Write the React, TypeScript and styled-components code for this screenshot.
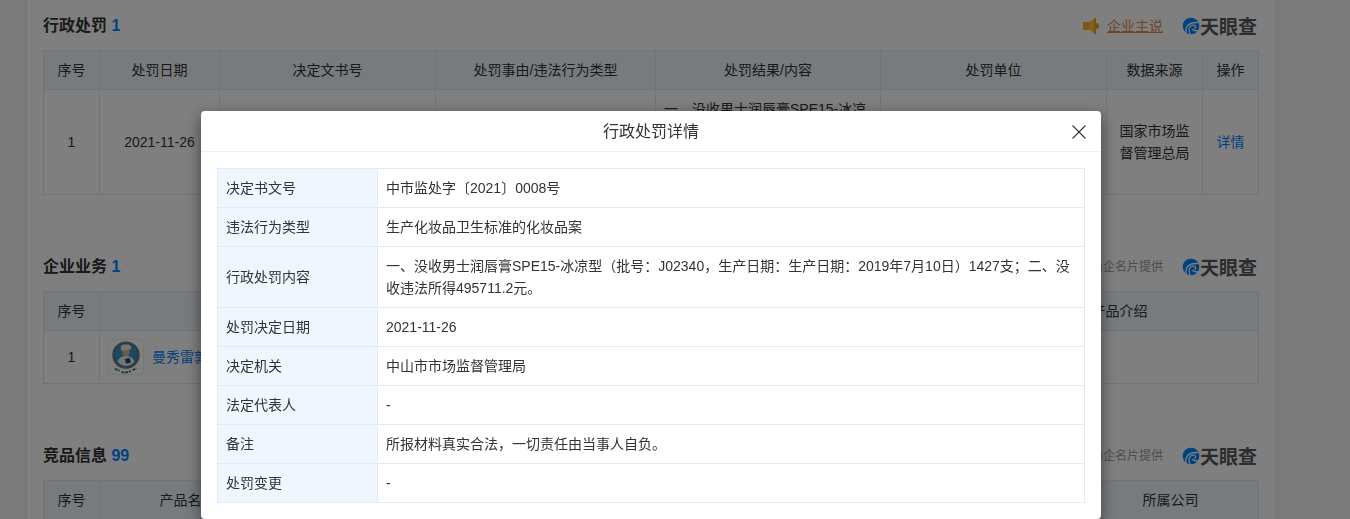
import React from "react";
import styled, { createGlobalStyle, css } from "styled-components";

const FONT = '"Liberation Sans", "Noto Sans CJK SC", sans-serif';
const BLUE = "#0084ff";
const LINE = "#dfecf7";
const HEAD = "#eff6fd";

const GlobalStyle = createGlobalStyle`
  *, *::before, *::after { box-sizing: border-box; }
  body {
    margin: 0;
    overflow: hidden;
    background: #f4f4f4;
    color: #333;
    font: 14px/22px ${FONT};
  }
`;

const Page = styled.div`
  height: 100vh;
  overflow: hidden;
  padding: 0 48px 0 0;
`;

const Card = styled.main`
  max-width: 1248px;
  margin: 0 auto;
  padding: 0 16px;
  background: #fff;
  box-shadow: 0 0 2px rgba(0, 0, 0, 0.1);
`;

const Section = styled.section`
  padding-bottom: 46px;
`;

const SectionHead = styled.header`
  display: flex;
  align-items: center;
  justify-content: space-between;
  height: 50px;
  padding: 2px 2px 0 0;
`;

const SectionTitle = styled.h2`
  margin: 0;
  font-size: 16px;
  line-height: 24px;
  font-weight: 700;
`;

const Count = styled.span`
  color: ${BLUE};
`;

const Extras = styled.div`
  display: flex;
  align-items: center;
  gap: 19px;
`;

const SpeakLink = styled.a`
  display: flex;
  align-items: center;
  gap: 8px;
  color: #e08a4a;
  text-decoration: none;
  span { text-decoration: underline; }
`;

const Provider = styled.span`
  font-size: 12px;
  color: #999;
`;

const Brand = styled.div`
  display: flex;
  align-items: center;
  font-family: "Noto Sans CJK SC", sans-serif;
  font-size: 19px;
  font-weight: 700;
  color: #55585e;
  white-space: nowrap;
  svg { flex: none; }
`;

const tableBase = css`
  width: 100%;
  table-layout: fixed;
  border-collapse: collapse;
  th, td {
    padding: 8px;
    border: 1px solid ${LINE};
    font-weight: 400;
  }
`;

const DataTable = styled.table`
  ${tableBase}
  th { background: ${HEAD}; }
`;

const Cell = styled.td<{ $left?: boolean }>`
  text-align: ${(p) => (p.$left ? "left" : "center")};
`;

const Clamp = styled.div`
  display: -webkit-box;
  -webkit-box-orient: vertical;
  -webkit-line-clamp: 4;
  overflow: hidden;
`;

const TextLink = styled.a`
  color: ${BLUE};
  text-decoration: none;
`;

const Product = styled.div`
  display: flex;
  align-items: center;
  gap: 8px;
`;

const Avatar = styled.span`
  display: flex;
  width: 36px;
  height: 36px;
  border: 1px solid #eee;
  border-radius: 4px;
  overflow: hidden;
`;

const Overlay = styled.div`
  position: fixed;
  inset: 0;
  padding: 111px 48px 0 0;
  background: rgba(0, 0, 0, 0.5);
`;

const Modal = styled.div`
  max-width: 900px;
  margin: 0 auto;
  border-radius: 4px;
  background: #fff;
  box-shadow: 0 5px 15px rgba(0, 0, 0, 0.5);
`;

const ModalHead = styled.header`
  display: grid;
  grid-template-columns: 1fr auto 1fr;
  align-items: center;
  height: 41px;
  padding: 1px 14px 0;
  border-bottom: 1px solid #f0f0f0;
`;

const ModalTitle = styled.h3`
  grid-column: 2;
  margin: 0;
  font-size: 16px;
  font-weight: 400;
`;

const CloseButton = styled.button`
  justify-self: end;
  display: flex;
  padding: 0;
  border: 0;
  background: none;
  color: #333;
  cursor: pointer;
`;

const ModalBody = styled.div`
  padding: 16px;
`;

const DetailTable = styled.table`
  ${tableBase}
  th {
    width: 160px;
    text-align: left;
    background: ${HEAD};
  }
`;

const SpeakerIcon = () => (
  <svg width="16" height="16" viewBox="0 0 16 16" aria-hidden="true">
    <path d="M0 4h7v8H0z" fill="#f0b429" />
    <path d="M6 4l6-3v14l-6-3z" fill="#ffc53d" />
    <path d="M11 0h2v16h-2z" fill="#eda91c" />
    <path d="M13 5a3 3 0 0 1 0 6z" fill="#e8a317" />
  </svg>
);

const BrandMark = () => (
  <svg width="18" height="18" viewBox="0 0 54 54" aria-hidden="true">
    <circle cx="27" cy="27" r="25" fill={BLUE} />
    <g fill="none" stroke="#fff">
      <path d="M12 48C9 28 20 14 50 17" strokeWidth="4" />
      <path d="M25 54C17 37 22 25 34 24c8 0 9 8 3 11" strokeWidth="3.500" />
      <path d="M30 37c6 5 14 6 24 4" strokeWidth="4" />
    </g>
  </svg>
);

const ChefLogo = () => (
  <svg width="34" height="34" viewBox="0 0 36 36" role="img" aria-label="曼秀雷敦">
    <circle cx="18" cy="16" r="14.500" fill="#56696a" />
    <circle cx="18" cy="16" r="13.300" fill="none" stroke="#a9b7b4" strokeDasharray="1 1" />
    <circle cx="18" cy="16" r="12" fill="#2d94cc" />
    <path d="M9 23c2-5 5-6 9-6s7 1 9 6c-5 6-13 6-18 0z" fill="#e4eaee" />
    <circle cx="18" cy="13" r="4" fill="#e3b58c" />
    <path d="M13 11c-2-5 2-7 5-6 4-1 7 2 5 5z" fill="#f4ead2" />
    <path d="M17 20l5-1 1 5-5 1z" fill="#24405e" />
    <path d="M6 31c2 0 4 0 5 2M13 34c4 1 7 0 10-1M25 32l4-2" fill="none" stroke="#2f7a5f" strokeWidth="2" strokeDasharray="3 1" />
  </svg>
);

const CloseIcon = () => (
  <svg width="16" height="16" viewBox="0 0 16 16" aria-hidden="true">
    <path d="M1.500 1.500l13 13M14.500 1.500l-13 13" stroke="currentColor" strokeWidth="1.100" />
  </svg>
);

const Logo = () => (
  <Brand>
    <BrandMark />
    天眼查
  </Brand>
);

type BlockProps = {
  title: string;
  count: number;
  note: React.ReactNode;
  widths: (number | undefined)[];
  columns: string[];
  children: React.ReactNode;
};

const Block = ({ title, count, note, widths, columns, children }: BlockProps) => (
  <Section>
    <SectionHead>
      <SectionTitle>
        {title} <Count>{count}</Count>
      </SectionTitle>
      <Extras>
        {note}
        <Logo />
      </Extras>
    </SectionHead>
    <DataTable>
      <colgroup>
        {widths.map((w, i) => (
          <col key={i} width={w} />
        ))}
      </colgroup>
      <thead>
        <tr>
          {columns.map((c) => (
            <th key={c} scope="col">{c}</th>
          ))}
        </tr>
      </thead>
      <tbody>{children}</tbody>
    </DataTable>
  </Section>
);

const CONTENT =
  "一、没收男士润唇膏SPE15-冰凉型（批号：J02340，生产日期：生产日期：2019年7月10日）1427支；二、没收违法所得495711.2元。";

const DETAILS: [string, string][] = [
  ["决定书文号", "中市监处字〔2021〕0008号"],
  ["违法行为类型", "生产化妆品卫生标准的化妆品案"],
  ["行政处罚内容", CONTENT],
  ["处罚决定日期", "2021-11-26"],
  ["决定机关", "中山市市场监督管理局"],
  ["法定代表人", "-"],
  ["备注", "所报材料真实合法，一切责任由当事人自负。"],
  ["处罚变更", "-"],
];

export default function App() {
  return (
    <>
      <GlobalStyle />
      <Page>
        <Card>
          <Block
            title="行政处罚"
            count={1}
            note={
              <SpeakLink href="#speak">
                <SpeakerIcon />
                <span>企业主说</span>
              </SpeakLink>
            }
            widths={[56, 120, 216, 220, 225, undefined, 96, 56]}
            columns={["序号", "处罚日期", "决定文书号", "处罚事由/违法行为类型", "处罚结果/内容", "处罚单位", "数据来源", "操作"]}
          >
            <tr>
              <Cell>1</Cell>
              <Cell>2021-11-26</Cell>
              <Cell />
              <Cell />
              <Cell $left>
                <Clamp>{CONTENT}</Clamp>
              </Cell>
              <Cell />
              <Cell>国家市场监督管理总局</Cell>
              <Cell>
                <TextLink href="#detail">详情</TextLink>
              </Cell>
            </tr>
          </Block>
          <Block
            title="企业业务"
            count={1}
            note={<Provider>由企名片提供</Provider>}
            widths={[56, undefined, 278]}
            columns={["序号", "产品", "产品介绍"]}
          >
            <tr>
              <Cell>1</Cell>
              <Cell $left>
                <Product>
                  <Avatar>
                    <ChefLogo />
                  </Avatar>
                  <TextLink href="#product">曼秀雷敦</TextLink>
                </Product>
              </Cell>
              <Cell />
            </tr>
          </Block>
          <Block
            title="竞品信息"
            count={99}
            note={<Provider>由企名片提供</Provider>}
            widths={[56, 176, undefined, 176]}
            columns={["序号", "产品名称", "地区", "所属公司"]}
          >
            <tr>
              <Cell>1</Cell>
              <Cell />
              <Cell />
              <Cell />
            </tr>
          </Block>
        </Card>
      </Page>
      <Overlay>
        <Modal role="dialog" aria-modal="true" aria-labelledby="detail-title">
          <ModalHead>
            <ModalTitle id="detail-title">行政处罚详情</ModalTitle>
            <CloseButton type="button" aria-label="关闭">
              <CloseIcon />
            </CloseButton>
          </ModalHead>
          <ModalBody>
            <DetailTable>
              <tbody>
                {DETAILS.map(([label, value]) => (
                  <tr key={label}>
                    <th scope="row">{label}</th>
                    <td>{value}</td>
                  </tr>
                ))}
              </tbody>
            </DetailTable>
          </ModalBody>
        </Modal>
      </Overlay>
    </>
  );
}
